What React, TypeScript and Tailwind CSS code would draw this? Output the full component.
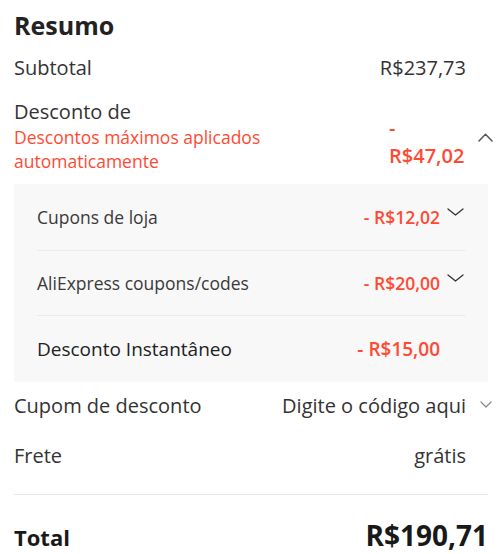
import React from "react";

const ChevronDown = () => (
  <svg width="17" height="8" viewBox="0 0 17 8" fill="none">
    <polyline points="1,1 8.5,7 16,1" stroke="#333" strokeWidth="1.3" strokeLinecap="round" strokeLinejoin="round" />
  </svg>
);

const ChevronUp = () => (
  <svg width="15" height="9" viewBox="0 0 15 9" fill="none">
    <polyline points="1,8 7.5,1.2 14,8" stroke="#555" strokeWidth="1.5" strokeLinecap="round" strokeLinejoin="round" />
  </svg>
);

const ChevronSmall = () => (
  <svg width="12" height="7" viewBox="0 0 12 7" fill="none">
    <polyline points="1,1 6,6 11,1" stroke="#888" strokeWidth="1.2" strokeLinecap="round" strokeLinejoin="round" />
  </svg>
);

export default function App() {
  return (
    <div
      className="w-[500px] h-[554px] bg-white pl-[14px] pr-[7px] pt-[9px] text-[#333] overflow-hidden"
      style={{ fontFamily: '"Open Sans", "Noto Sans", sans-serif' }}
    >
      <h2 className="text-[25px] leading-[32px] font-bold text-[#222]">Resumo</h2>

      <div className="mt-[13px] flex items-baseline justify-between text-[20px] leading-[28px]">
        <span>Subtotal</span>
        <div className="flex items-baseline">
          <span>R$237,73</span>
          <span className="w-[27px]" />
        </div>
      </div>

      <div className="mt-[17px] flex justify-between">
        <div className="flex flex-col">
          <span className="text-[20px] leading-[26px]">Desconto de</span>
          <span className="text-[17.5px] leading-[24px] text-[#ff4a33]">
            Descontos máximos aplicados
            <br />
            automaticamente
          </span>
        </div>
        <div className="flex items-center">
          <div className="w-[77px] mt-[12px] text-[20px] leading-[28px] font-semibold text-[#ff4a33]">
            <div>-</div>
            <div>R$47,02</div>
          </div>
          <div className="w-[27px] flex justify-end mt-[2px]">
            <ChevronUp />
          </div>
        </div>
      </div>

      <div className="mt-[11px] mr-[5px] bg-[#f8f8f8] pl-[23px] pr-[22px]">
        <div className="h-[67px] flex items-center justify-between border-b border-[#ececec] text-[17.5px] leading-[24px]">
          <span className="text-[#3a3a3a]">Cupons de loja</span>
          <div className="flex items-center">
            <span className="font-semibold text-[#ff4a33]">- R$12,02</span>
            <div className="w-[26px] flex justify-end pr-[2px] mb-[10px]">
              <ChevronDown />
            </div>
          </div>
        </div>
        <div className="h-[65px] flex items-center justify-between border-b border-[#ececec] text-[17.5px] leading-[24px]">
          <span className="text-[#3a3a3a]">AliExpress coupons/codes</span>
          <div className="flex items-center">
            <span className="font-semibold text-[#ff4a33]">- R$20,00</span>
            <div className="w-[26px] flex justify-end pr-[2px] mb-[10px]">
              <ChevronDown />
            </div>
          </div>
        </div>
        <div className="h-[66px] flex items-center justify-between text-[19px] leading-[26px]">
          <span className="text-[#222]">Desconto Instantâneo</span>
          <div className="flex items-center">
            <span className="font-semibold text-[#ff4a33]">- R$15,00</span>
            <div className="w-[26px]" />
          </div>
        </div>
      </div>

      <div className="mt-[10px] flex items-baseline justify-between text-[20px] leading-[28px]">
        <span>Cupom de desconto</span>
        <div className="flex items-center">
          <span>Digite o código aqui</span>
          <div className="w-[27px] flex justify-end pr-[1px] mb-[4px]">
            <ChevronSmall />
          </div>
        </div>
      </div>

      <div className="mt-[22px] flex items-baseline justify-between text-[20px] leading-[28px]">
        <span>Frete</span>
        <div className="flex items-baseline">
          <span>grátis</span>
          <span className="w-[27px]" />
        </div>
      </div>

      <div className="mt-[24px] mr-[5px] border-t border-[#e8e8e8]" />

      <div className="mt-[22px] mr-[5px] flex items-baseline justify-between text-[#191919]">
        <span className="text-[22px] leading-[30px] font-bold">Total</span>
        <span className="text-[28px] leading-[36px] font-bold">R$190,71</span>
      </div>
    </div>
  );
}
